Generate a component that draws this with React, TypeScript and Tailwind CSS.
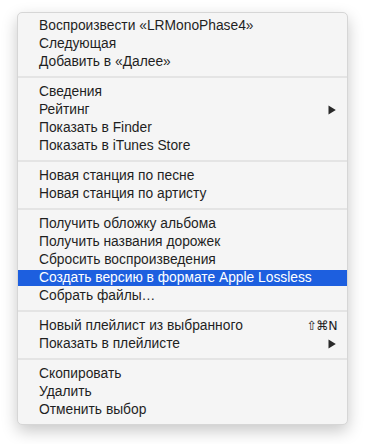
type Item = {
  label: string;
  submenu?: boolean;
  shortcut?: string;
  active?: boolean;
};

const sections: Item[][] = [
  [
    { label: 'Воспроизвести «LRMonoPhase4»' },
    { label: 'Следующая' },
    { label: 'Добавить в «Далее»' },
  ],
  [
    { label: 'Сведения' },
    { label: 'Рейтинг', submenu: true },
    { label: 'Показать в Finder' },
    { label: 'Показать в iTunes Store' },
  ],
  [{ label: 'Новая станция по песне' }, { label: 'Новая станция по артисту' }],
  [
    { label: 'Получить обложку альбома' },
    { label: 'Получить названия дорожек' },
    { label: 'Сбросить воспроизведения' },
    { label: 'Создать версию в формате Apple Lossless', active: true },
    { label: 'Собрать файлы…' },
  ],
  [
    { label: 'Новый плейлист из выбранного', shortcut: '⇧⌘N' },
    { label: 'Показать в плейлисте', submenu: true },
  ],
  [{ label: 'Скопировать' }, { label: 'Удалить' }, { label: 'Отменить выбор' }],
];

function Row({ item }: { item: Item }) {
  return (
    <div className="flex h-[18px] items-center py-px">
      <div
        className={
          'flex h-4 w-full items-center justify-between pl-[21px] pr-[10px] ' +
          (item.active ? 'bg-[#1d5fdf] text-white' : 'text-[#1f1f1f]')
        }
      >
        <span className="whitespace-nowrap">{item.label}</span>
        {item.shortcut ? (
          <span className="whitespace-nowrap font-['DejaVu_Sans',sans-serif] text-[12.5px] tracking-[-0.5px]">
            {item.shortcut}
          </span>
        ) : null}
        {item.submenu ? (
          <svg width="8" height="10" viewBox="0 0 8 10" className="mr-[1px]">
            <path d="M0.5 0.5 L7.8 5 L0.5 9.5 Z" fill="#2a2a2a" />
          </svg>
        ) : null}
      </div>
    </div>
  );
}

export default function App() {
  return (
    <div className="min-h-[444px] bg-white pl-[17px] pt-[12px] font-['Liberation_Sans',Arial,sans-serif] text-[13.8px]">
      <div className="w-[331px] rounded-[5px] border border-[#d6d6d6] bg-[#f5f5f5] pt-[4px] pb-[5px] shadow-[0_6px_16px_rgba(0,0,0,0.22)]">
        {sections.map((sec, i) => (
          <div key={i}>
            {i > 0 ? (
              <div className="flex h-[12px] items-center">
                <div className="h-[2px] w-full bg-[#e4e4e4]" />
              </div>
            ) : null}
            {sec.map((it) => (
              <Row key={it.label} item={it} />
            ))}
          </div>
        ))}
      </div>
    </div>
  );
}
